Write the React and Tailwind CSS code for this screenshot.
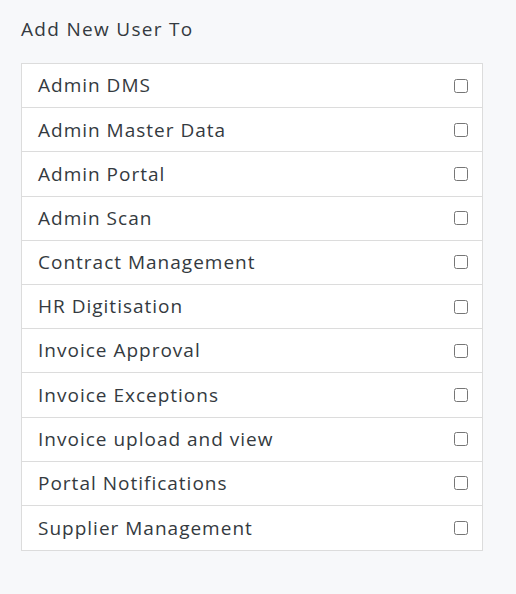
import React from 'react';

const apps = [
  'Admin DMS',
  'Admin Master Data',
  'Admin Portal',
  'Admin Scan',
  'Contract Management',
  'HR Digitisation',
  'Invoice Approval',
  'Invoice Exceptions',
  'Invoice upload and view',
  'Portal Notifications',
  'Supplier Management',
];

export default function App() {
  return (
    <div className="min-h-[594px] w-[516px] bg-[#f7f8fa] pl-[21px] pt-[13px] font-['Open_Sans',sans-serif] text-[#343a40]">
      <h2 className="text-[19px] leading-[32px] font-normal tracking-[1.3px]">Add New User To</h2>
      <div className="mt-[18px] w-[462px] border border-[#dcdcdc] bg-white">
        {apps.map((name, i) => (
          <label
            key={name}
            className={`flex h-[44.2px] items-center justify-between pl-4 pr-[14px] ${
              i < apps.length - 1 ? 'border-b border-[#dcdcdc]' : ''
            }`}
          >
            <span className="text-[19px] tracking-[1px]">{name}</span>
            <input type="checkbox" className="h-[14px] w-[14px]" />
          </label>
        ))}
      </div>
    </div>
  );
}
